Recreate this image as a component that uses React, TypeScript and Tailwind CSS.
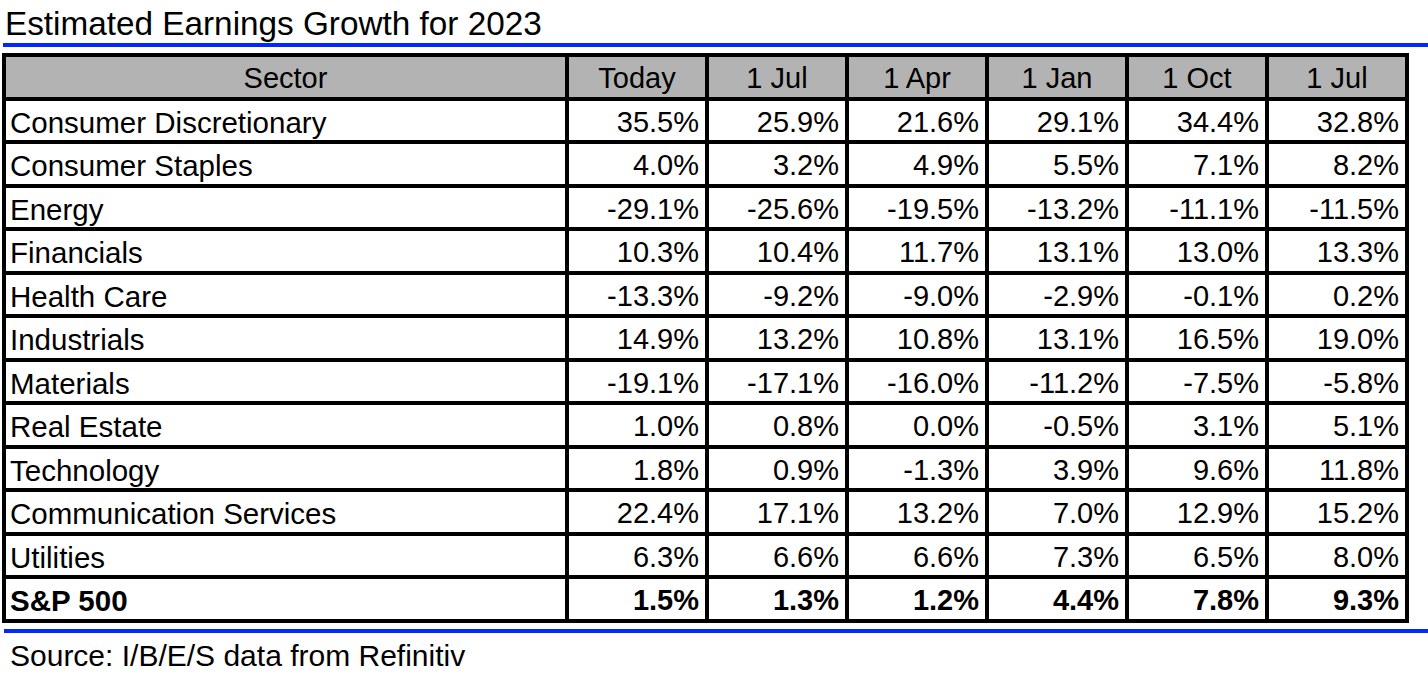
const columns = ["Today", "1 Jul", "1 Apr", "1 Jan", "1 Oct", "1 Jul"];

const rows: { sector: string; values: string[]; total?: boolean }[] = [
  { sector: "Consumer Discretionary", values: ["35.5%", "25.9%", "21.6%", "29.1%", "34.4%", "32.8%"] },
  { sector: "Consumer Staples", values: ["4.0%", "3.2%", "4.9%", "5.5%", "7.1%", "8.2%"] },
  { sector: "Energy", values: ["-29.1%", "-25.6%", "-19.5%", "-13.2%", "-11.1%", "-11.5%"] },
  { sector: "Financials", values: ["10.3%", "10.4%", "11.7%", "13.1%", "13.0%", "13.3%"] },
  { sector: "Health Care", values: ["-13.3%", "-9.2%", "-9.0%", "-2.9%", "-0.1%", "0.2%"] },
  { sector: "Industrials", values: ["14.9%", "13.2%", "10.8%", "13.1%", "16.5%", "19.0%"] },
  { sector: "Materials", values: ["-19.1%", "-17.1%", "-16.0%", "-11.2%", "-7.5%", "-5.8%"] },
  { sector: "Real Estate", values: ["1.0%", "0.8%", "0.0%", "-0.5%", "3.1%", "5.1%"] },
  { sector: "Technology", values: ["1.8%", "0.9%", "-1.3%", "3.9%", "9.6%", "11.8%"] },
  { sector: "Communication Services", values: ["22.4%", "17.1%", "13.2%", "7.0%", "12.9%", "15.2%"] },
  { sector: "Utilities", values: ["6.3%", "6.6%", "6.6%", "7.3%", "6.5%", "8.0%"] },
  { sector: "S&P 500", values: ["1.5%", "1.3%", "1.2%", "4.4%", "7.8%", "9.3%"], total: true },
];

export default function App() {
  return (
    <div className="w-[1428px] h-[684px] bg-white text-black font-['Liberation_Sans',Arial,sans-serif] overflow-hidden">
      {/* Title */}
      <div className="pt-[7px] pl-[5px] text-[33.3px] leading-[33px]">Estimated Earnings Growth for 2023</div>
      <div className="mt-[3px] ml-[3px] h-[4px] bg-[#0028ff]" />

      {/* Table */}
      <div className="mt-[6px] ml-[2px] w-[1407px] border-4 border-black bg-black grid grid-cols-[559px_repeat(6,1fr)] auto-rows-[39.5px] gap-[4px] text-[29px]">
        <div className="bg-[#b3b3b3] text-center pt-[2px] leading-[39.5px]">Sector</div>
        {columns.map((c, i) => (
          <div key={i} className="bg-[#b3b3b3] text-center pt-[2px] leading-[39.5px]">
            {c}
          </div>
        ))}
        {rows.map((r) => (
          <div key={r.sector} className="contents">
            <div className={`bg-white pl-[4px] pt-[2px] leading-[39.5px] text-[29.5px] whitespace-nowrap ${r.total ? "font-bold" : ""}`}>
              {r.sector}
            </div>
            {r.values.map((v, i) => (
              <div
                key={i}
                className={`bg-white text-right pr-[6px] pt-[2px] leading-[39.5px] ${r.total ? "font-bold" : ""}`}
              >
                {v}
              </div>
            ))}
          </div>
        ))}
      </div>

      <div className="mt-[6px] ml-[4px] h-[4px] bg-[#0028ff]" />
      <div className="mt-[8px] pl-[10px] text-[30px] leading-[30px]">Source: I/B/E/S data from Refinitiv</div>
    </div>
  );
}
